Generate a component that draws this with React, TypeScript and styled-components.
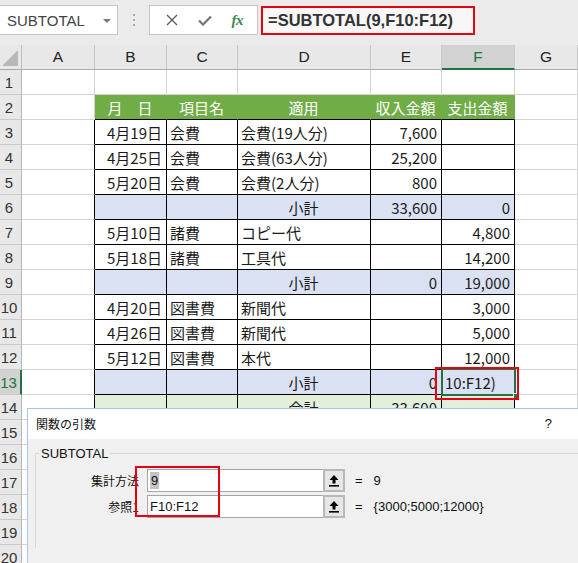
import React from 'react';
import styled, { createGlobalStyle } from 'styled-components';

const Global = createGlobalStyle`
  html, body { margin: 0; padding: 0; background: #fff; overflow: hidden; }
  * { box-sizing: border-box; }
`;

const GREEN = '#217346';
const GRID = '#d4d4d4';
const UI = '"Liberation Sans", "Noto Sans CJK JP", sans-serif';
const JP = '"Noto Sans CJK JP", "Liberation Sans", sans-serif';

const Page = styled.div`
  position: relative;
  width: 578px;
  height: 563px;
  overflow: hidden;
  background: #fff;
`;

const TopBar = styled.div`
  height: 45px;
  background: #ebebeb;
  display: flex;
  align-items: flex-start;
  padding-top: 5px;
`;

const NameBox = styled.div`
  width: 118px;
  height: 30px;
  background: #fff;
  border: 1px solid #c6c6c6;
  border-left: none;
  display: flex;
  align-items: center;
  justify-content: space-between;
  padding: 0 6px 0 7px;
  font: 15px ${UI};
  color: #444;
`;

const Caret = styled.span`
  width: 0;
  height: 0;
  border-left: 4px solid transparent;
  border-right: 4px solid transparent;
  border-top: 4px solid #7a7a7a;
  margin-top: 1px;
`;

const Grip = styled.div`
  width: 31px;
  height: 30px;
  display: flex;
  flex-direction: column;
  align-items: center;
  justify-content: center;
  gap: 3px;
`;

const GripDot = styled.span`
  width: 2px;
  height: 2px;
  background: #aaa;
`;

const FxButtons = styled.div`
  width: 109px;
  height: 30px;
  background: #fff;
  border: 1px solid #c6c6c6;
  display: flex;
  align-items: center;
  justify-content: space-around;
  padding: 0 4px 0 6px;
`;

const Fx = styled.span`
  font: italic 600 15px "Liberation Serif", serif;
  color: #3a8a4a;
  letter-spacing: -0.5px;
`;

const FormulaField = styled.div`
  flex: 1;
  height: 30px;
  margin-left: 3px;
  display: flex;
  align-items: flex-start;
`;

const Callout = styled.div`
  width: 214px;
  height: 29px;
  margin-top: 1px;
  border: 2px solid #e60012;
  background: #f7f7f7;
  display: flex;
  align-items: center;
  padding-left: 5px;
  font: 600 16.5px ${UI};
  color: #333;
`;

const Sheet = styled.div`
  display: grid;
  grid-template-columns: 22px 73px 72px 71px 133px 71px 73px 63px;
  grid-auto-rows: 25px;
`;

const Corner = styled.div`
  background: #e8e8e8;
  border-right: 1px solid #bdbdbd;
  border-bottom: 1px solid #a9a9a9;
  display: flex;
  align-items: flex-end;
  justify-content: flex-end;
  padding: 0 3px 3px 0;
`;

const ColHead = styled.div<{ $sel?: boolean }>`
  background: ${p => (p.$sel ? '#d2d2d2' : '#e8e8e8')};
  border-right: 1px solid #c8c8c8;
  border-bottom: ${p => (p.$sel ? `2px solid ${GREEN}` : '1px solid #a9a9a9')};
  display: flex;
  align-items: center;
  justify-content: center;
  font: 15.5px ${UI};
  color: ${p => (p.$sel ? GREEN : '#222')};
`;

const RowHead = styled.div<{ $sel?: boolean }>`
  background: ${p => (p.$sel ? '#d2d2d2' : '#e8e8e8')};
  border-bottom: 1px solid #c9c9c9;
  border-right: ${p => (p.$sel ? `2px solid ${GREEN}` : '1px solid #b5b5b5')};
  display: flex;
  align-items: center;
  justify-content: center;
  padding-right: 3px;
  font: 15px ${UI};
  color: ${p => (p.$sel ? GREEN : '#333')};
`;

type Align = 'left' | 'center' | 'right';

const Cell = styled.div<{ $fill?: string; $align?: Align; $rb?: string; $bb?: string; $color?: string }>`
  position: relative;
  background: ${p => p.$fill ?? '#fff'};
  border-right: 1px solid ${p => p.$rb ?? GRID};
  border-bottom: 1px solid ${p => p.$bb ?? GRID};
  display: flex;
  align-items: center;
  justify-content: ${p => (p.$align === 'right' ? 'flex-end' : p.$align === 'center' ? 'center' : 'flex-start')};
  padding: 0 4px 0 3px;
  font: 15px ${JP};
  color: ${p => p.$color ?? '#1a1a1a'};
  white-space: nowrap;
`;

const Selection = styled.div`
  position: absolute;
  left: -1px;
  top: -2px;
  right: -2px;
  bottom: -2px;
  border: 2px solid ${GREEN};
  z-index: 2;
  pointer-events: none;
`;

const FillHandle = styled.span`
  position: absolute;
  right: -5px;
  bottom: -5px;
  width: 6px;
  height: 6px;
  background: ${GREEN};
  border: 1px solid #fff;
`;

const RedMark = styled.div`
  position: absolute;
  left: -7px;
  top: -3px;
  right: -5px;
  bottom: -6px;
  border: 2px solid #e60012;
  z-index: 3;
  pointer-events: none;
`;

const Dialog = styled.div`
  position: absolute;
  left: 27px;
  top: 408px;
  width: 570px;
  height: 170px;
  border: 1px solid #a9c5e6;
  background: #f0f0f0;
  z-index: 5;
`;

const TitleBar = styled.div`
  height: 30px;
  background: #fff;
  display: flex;
  align-items: center;
  justify-content: space-between;
  padding: 0 44px 2px 8px;
  font: 12px ${JP};
  color: #111;
`;

const Help = styled.span`
  font: 13px ${UI};
  color: #111;
`;

const Body = styled.div`
  padding: 7px 0 0 7px;
`;

const Group = styled.fieldset`
  position: relative;
  margin: 0;
  padding: 0 0 30px 0;
  border: 1px solid #d9d9d9;
  border-right: none;
  border-bottom: none;
`;

const Legend = styled.legend`
  margin-left: 3px;
  padding: 0 2px;
  font: 13px ${UI};
  color: #111;
`;

const ArgGrid = styled.div`
  display: grid;
  grid-template-columns: 104px 196px auto;
  grid-auto-rows: 23px;
  column-gap: 9px;
  row-gap: 3px;
  margin-top: 8px;
  align-items: center;
  justify-content: start;
`;

const ArgLabel = styled.div`
  text-align: right;
  font: 12px ${JP};
  color: #111;
  margin-right: 1px;
`;

const ArgBox = styled.div`
  display: flex;
  height: 23px;
  margin-left: -2px;
`;

const ArgInput = styled.div`
  flex: 1;
  background: #fff;
  border: 1px solid #a6a6a6;
  border-right: none;
  display: flex;
  align-items: center;
  padding-left: 2px;
  font: 13px ${UI};
  color: #111;
`;

const Picked = styled.span`
  display: inline-block;
  height: 17px;
  line-height: 17px;
  background: #c4c4c4;
  padding: 0 1px;
`;

const RefButton = styled.div`
  width: 22px;
  background: #e6e6e6;
  border: 2px solid #b8b8b8;
  display: flex;
  align-items: center;
  justify-content: center;
`;

const ArgResult = styled.div`
  display: flex;
  gap: 11px;
  font: 13px ${UI};
  color: #111;
  margin-left: 1px;
`;

const DialogMark = styled.div`
  position: absolute;
  left: 99px;
  top: 5px;
  width: 85px;
  height: 51px;
  border: 2px solid #e60012;
  pointer-events: none;
`;

type RowKind = 'blank' | 'head' | 'data' | 'sub' | 'total';
interface Row {
  n: number;
  kind: RowKind;
  cells?: string[];
}

const rows: Row[] = [
  { n: 1, kind: 'blank' },
  { n: 2, kind: 'head', cells: ['月　日', '項目名', '適用', '収入金額', '支出金額'] },
  { n: 3, kind: 'data', cells: ['4月19日', '会費', '会費(19人分)', '7,600', ''] },
  { n: 4, kind: 'data', cells: ['4月25日', '会費', '会費(63人分)', '25,200', ''] },
  { n: 5, kind: 'data', cells: ['5月20日', '会費', '会費(2人分)', '800', ''] },
  { n: 6, kind: 'sub', cells: ['', '', '小計', '33,600', '0'] },
  { n: 7, kind: 'data', cells: ['5月10日', '諸費', 'コピー代', '', '4,800'] },
  { n: 8, kind: 'data', cells: ['5月18日', '諸費', '工具代', '', '14,200'] },
  { n: 9, kind: 'sub', cells: ['', '', '小計', '0', '19,000'] },
  { n: 10, kind: 'data', cells: ['4月20日', '図書費', '新聞代', '', '3,000'] },
  { n: 11, kind: 'data', cells: ['4月26日', '図書費', '新聞代', '', '5,000'] },
  { n: 12, kind: 'data', cells: ['5月12日', '図書費', '本代', '', '12,000'] },
  { n: 13, kind: 'sub', cells: ['', '', '小計', '0', '10:F12)'] },
  { n: 14, kind: 'total', cells: ['', '', '合計', '33,600', ''] },
  { n: 15, kind: 'blank' },
  { n: 16, kind: 'blank' },
  { n: 17, kind: 'blank' },
  { n: 18, kind: 'blank' },
  { n: 19, kind: 'blank' },
  { n: 20, kind: 'blank' },
];

const fills: Record<RowKind, string> = {
  blank: '#fff',
  head: '#70ad47',
  data: '#fff',
  sub: '#d9e1f2',
  total: '#e2efda',
};

const baseAlign: Align[] = ['right', 'left', 'left', 'right', 'right'];

const CornerTriangle = () => (
  <svg width="16" height="16" viewBox="0 0 16 16">
    <polygon points="16,0 16,16 0,16" fill="#b8b8b8" />
  </svg>
);

const CancelIcon = () => (
  <svg width="12" height="12" viewBox="0 0 12 12">
    <path d="M1 1 L11 11 M11 1 L1 11" stroke="#5e5e5e" strokeWidth="1.4" fill="none" />
  </svg>
);

const EnterIcon = () => (
  <svg width="14" height="11" viewBox="0 0 14 11">
    <path d="M1 5.5 L5 9.5 L13 1.5" stroke="#767676" strokeWidth="2.3" fill="none" />
  </svg>
);

const UpArrow = () => (
  <svg width="10" height="12" viewBox="0 0 10 12">
    <path d="M5 0 L9.5 5 H6.5 V8.5 H3.5 V5 H0.5 Z" fill="#000" />
    <rect x="0" y="10" width="10" height="1.6" fill="#000" />
  </svg>
);

function renderRow(r: Row) {
  const out: React.ReactNode[] = [];
  const inTable = r.n >= 3 && r.n <= 14;
  out.push(
    <RowHead key={`h${r.n}`} $sel={r.n === 13}>
      {r.n}
    </RowHead>
  );
  out.push(<Cell key={`a${r.n}`} $rb={inTable ? '#000' : GRID} />);
  for (let i = 0; i < 5; i++) {
    const text = r.cells ? r.cells[i] : '';
    if (r.kind === 'blank') {
      out.push(<Cell key={`c${r.n}-${i}`} />);
      continue;
    }
    let align: Align = baseAlign[i];
    if (r.kind === 'head') align = 'center';
    if ((r.kind === 'sub' || r.kind === 'total') && i === 2) align = 'center';
    const isActive = r.n === 13 && i === 4;
    if (isActive) align = 'left';
    out.push(
      <Cell
        key={`c${r.n}-${i}`}
        $fill={fills[r.kind]}
        $align={align}
        $rb={r.kind === 'head' ? '#70ad47' : '#000'}
        $bb="#000"
        $color={r.kind === 'head' ? '#fff' : undefined}
      >
        {text}
        {isActive && (
          <>
            <Selection>
              <FillHandle />
            </Selection>
            <RedMark />
          </>
        )}
      </Cell>
    );
  }
  out.push(<Cell key={`g${r.n}`} />);
  return out;
}

export default function App() {
  const cols = ['A', 'B', 'C', 'D', 'E', 'F', 'G'];
  return (
    <Page>
      <Global />
      <TopBar>
        <NameBox>
          <span>SUBTOTAL</span>
          <Caret />
        </NameBox>
        <Grip>
          <GripDot />
          <GripDot />
          <GripDot />
        </Grip>
        <FxButtons>
          <CancelIcon />
          <EnterIcon />
          <Fx>fx</Fx>
        </FxButtons>
        <FormulaField>
          <Callout>=SUBTOTAL(9,F10:F12)</Callout>
        </FormulaField>
      </TopBar>
      <Sheet>
        <Corner>
          <CornerTriangle />
        </Corner>
        {cols.map(c => (
          <ColHead key={c} $sel={c === 'F'}>
            {c}
          </ColHead>
        ))}
        {rows.map(renderRow)}
      </Sheet>
      <Dialog>
        <TitleBar>
          <span>関数の引数</span>
          <Help>?</Help>
        </TitleBar>
        <Body>
          <Group>
            <Legend>SUBTOTAL</Legend>
            <ArgGrid>
              <ArgLabel>集計方法</ArgLabel>
              <ArgBox>
                <ArgInput>
                  <Picked>9</Picked>
                </ArgInput>
                <RefButton>
                  <UpArrow />
                </RefButton>
              </ArgBox>
              <ArgResult>
                <span>=</span>
                <span>9</span>
              </ArgResult>
              <ArgLabel>参照1</ArgLabel>
              <ArgBox>
                <ArgInput>F10:F12</ArgInput>
                <RefButton>
                  <UpArrow />
                </RefButton>
              </ArgBox>
              <ArgResult>
                <span>=</span>
                <span>{'{3000;5000;12000}'}</span>
              </ArgResult>
            </ArgGrid>
            <DialogMark />
          </Group>
        </Body>
      </Dialog>
    </Page>
  );
}
